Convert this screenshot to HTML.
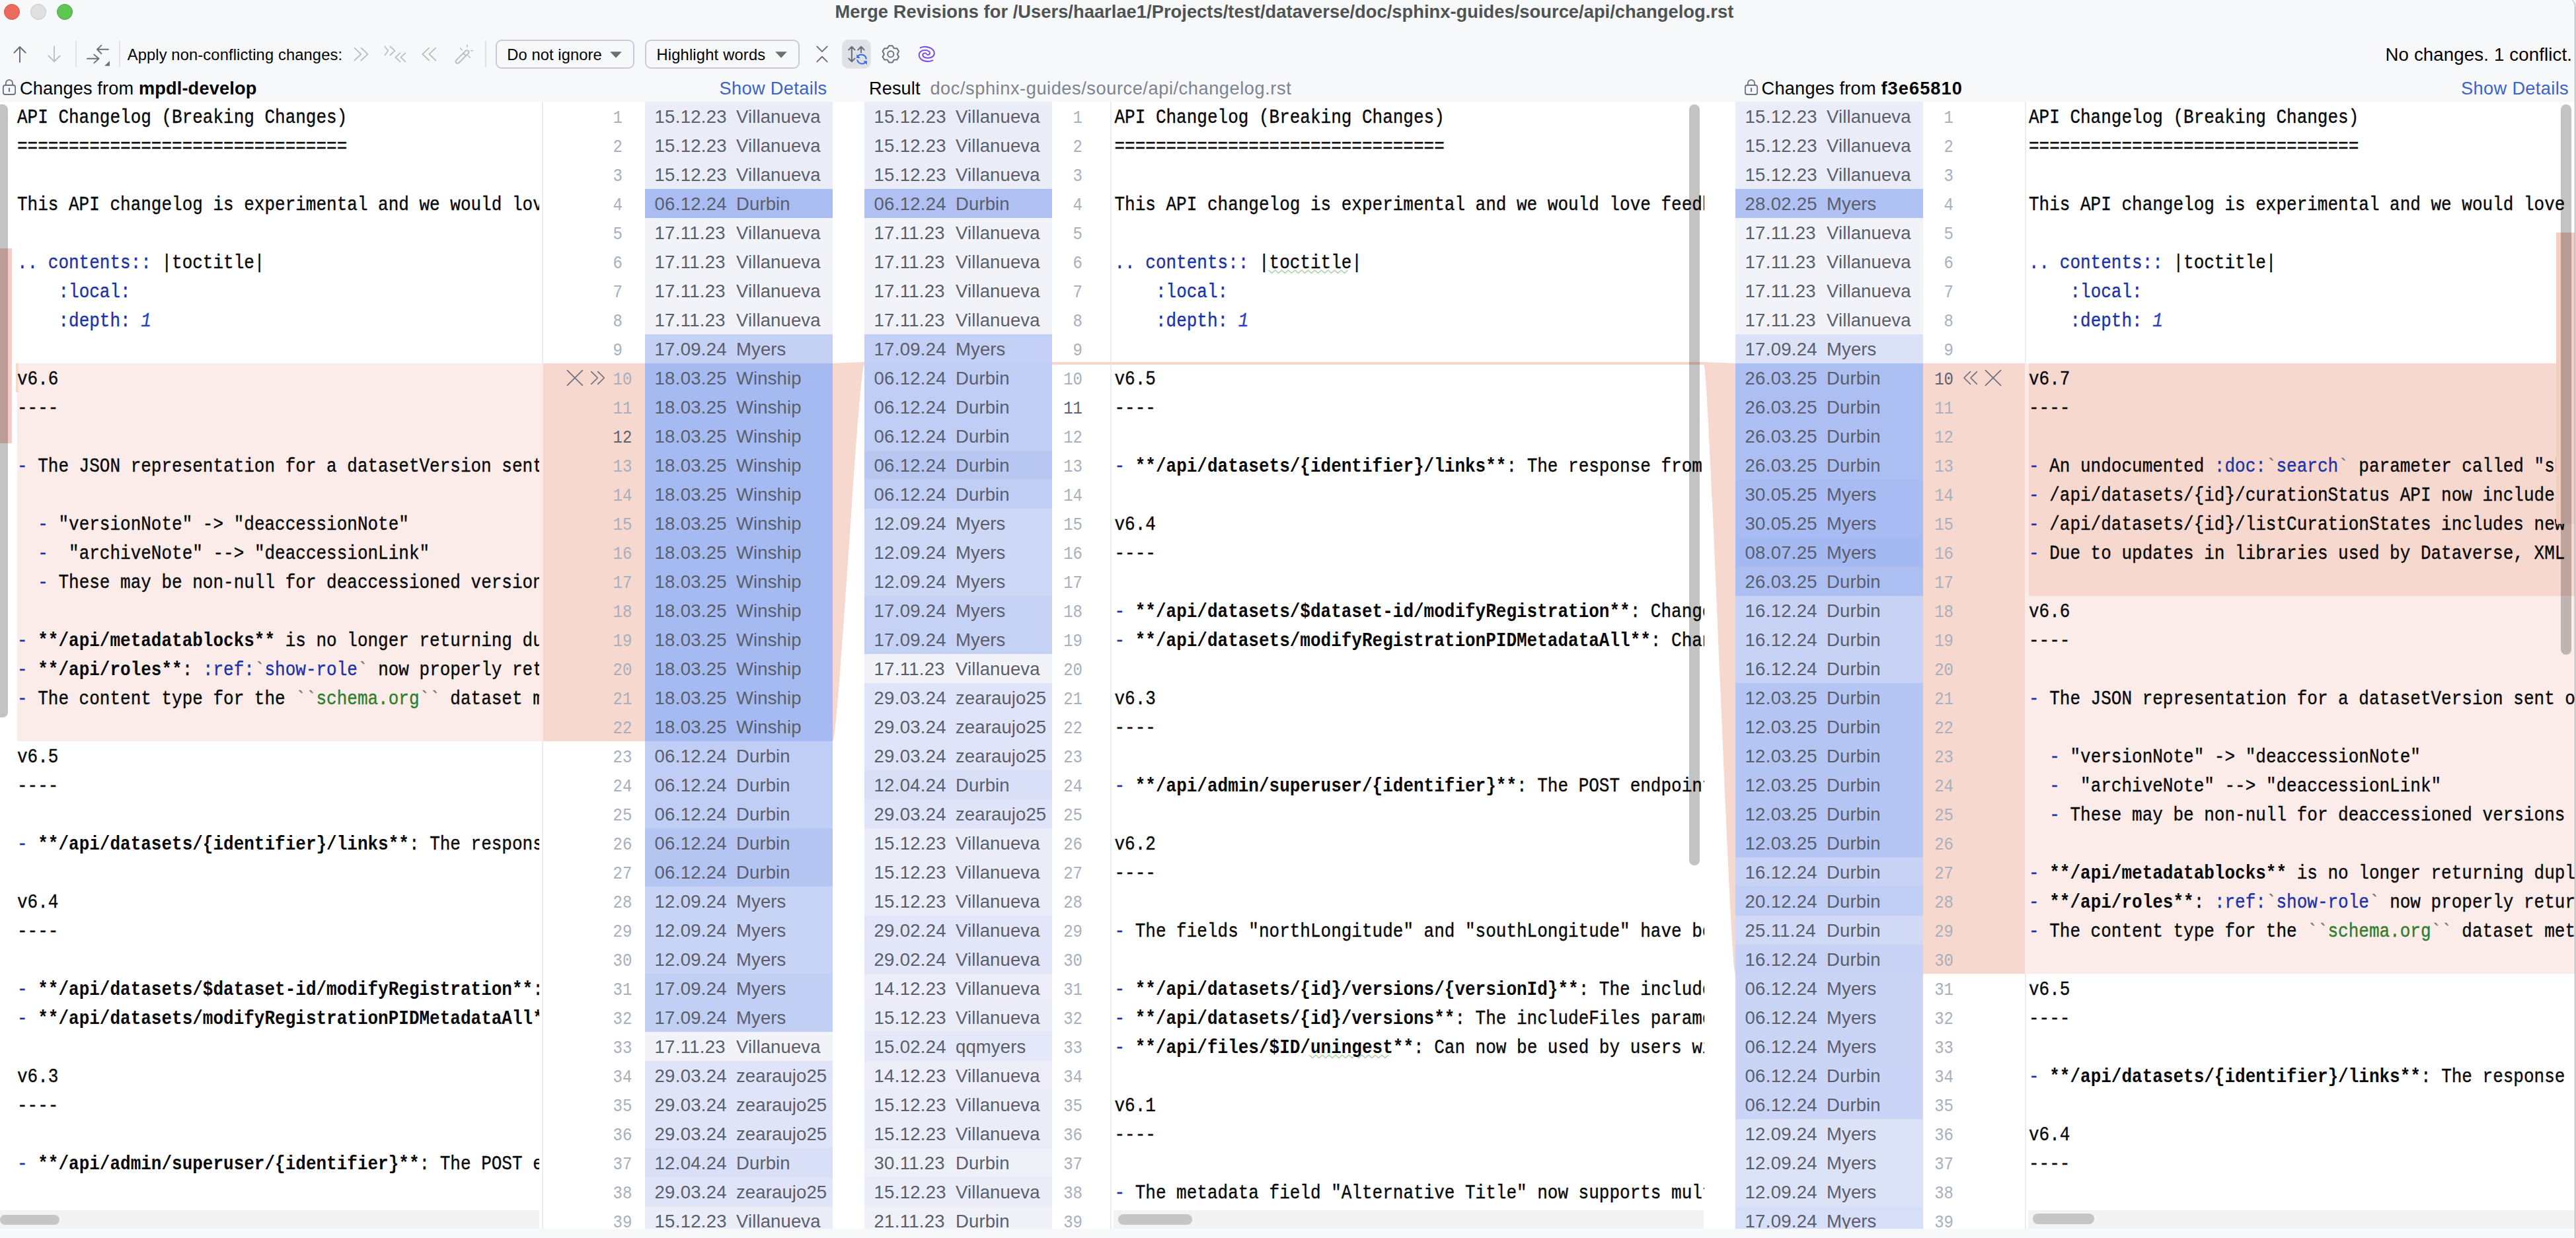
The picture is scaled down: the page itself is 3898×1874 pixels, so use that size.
<!DOCTYPE html><html><head><meta charset="utf-8"><style>
html,body{margin:0;padding:0;}
body{width:3898px;height:1874px;position:relative;overflow:hidden;background:#f7f8fa;font-family:"Liberation Sans",sans-serif;}
.tp{position:absolute;top:154px;height:1706px;overflow:hidden;}
.tl{position:absolute;height:44px;line-height:44px;padding-top:3px;box-sizing:border-box;white-space:pre;font-family:"Liberation Mono",monospace;font-size:26px;color:#080808;-webkit-text-stroke:0.35px currentColor;transform:scaleY(1.14);transform-origin:0 31.5px;}
.kb{color:#1c33a8;}
.kB{font-weight:bold;-webkit-text-stroke:0;}
.kg{color:#7a7a7a;}
.kG{color:#2f7d2f;}
.ki{color:#2a44c0;font-style:italic;}
.an{position:absolute;height:44px;line-height:44px;padding-top:1px;box-sizing:border-box;font-size:27.5px;letter-spacing:0.3px;color:#5a5e6a;white-space:pre;}
.ln{position:absolute;width:60px;text-align:right;height:44px;line-height:44px;padding-top:2px;box-sizing:border-box;font-family:"Liberation Mono",monospace;font-size:24px;color:#a8afbd;transform:scaleY(1.125);transform-origin:0 14.1px;}
.ln.cur{color:#5e626e;}
.ui{position:absolute;white-space:pre;}
</style></head><body>
<div style="position:absolute;left:6px;top:6px;width:24px;height:24px;box-sizing:border-box;border-radius:50%;background:#ec6a5e;border:1px solid #d8543f"></div>
<div style="position:absolute;left:46px;top:6px;width:24px;height:24px;box-sizing:border-box;border-radius:50%;background:#e0e0e0;border:1px solid #c6c6c6"></div>
<div style="position:absolute;left:86px;top:6px;width:24px;height:24px;box-sizing:border-box;border-radius:50%;background:#5fc653;border:1px solid #40a93a"></div>
<div class="ui" style="left:1263.5px;top:1px;height:36px;line-height:34px;font-size:27.3px;letter-spacing:0.035px;font-weight:bold;color:#505354">Merge Revisions for /Users/haarlae1/Projects/test/dataverse/doc/sphinx-guides/source/api/changelog.rst</div>
<svg style="position:absolute;left:0;top:55px" width="760" height="60" viewBox="0 55 760 60">
<g fill="none" stroke-linecap="round" stroke-linejoin="round">
<path d="M30 71 V94 M21.5 79.7 L30 71 L38.7 79.7" stroke="#6c707e" stroke-width="2"/>
<path d="M82 70 V93.5 M73.4 84.5 L82 93 L90.8 84.5" stroke="#bdbdbd" stroke-width="1.8"/>
<path d="M147 74.8 H164 M153.5 68.6 L147 74.8 L153.5 81.2" stroke="#6c707e" stroke-width="1.9"/>
<path d="M132 88.8 H149.6 M142.3 82.6 L149.6 88.8 L142.3 95.4" stroke="#6c707e" stroke-width="1.9"/>
<path d="M536.3 72.4 L546.4 82 L536.3 91.5 M546.4 72.4 L556.5 82 L546.4 91.5" stroke="#bdbdbd" stroke-width="1.8"/>
<path d="M582.3 70.3 L587.3 76.7 L582.3 83.5 M590.3 70.3 L597.4 76.7 L590.3 83.5" stroke="#bdbdbd" stroke-width="1.8"/>
<path d="M605.5 80.2 L598.4 86.8 L605.5 93.4 M613.5 80.2 L606.5 86.8 L613.5 93.4" stroke="#bdbdbd" stroke-width="1.8"/>
<path d="M649.4 72.4 L639.3 82 L649.4 91.5 M659.5 72.4 L649.4 82 L659.5 91.5" stroke="#bdbdbd" stroke-width="1.8"/>
<path d="M690.5 91 L704.5 77 a2.8 2.8 0 0 1 4 4 L694.5 95 a2.8 2.8 0 0 1 -4 -4 Z M701 80.5 L705 84.5" stroke="#bdbdbd" stroke-width="1.8"/>
<path d="M706.9 68 V71 M712.5 76.7 H715.5 M708.4 84.3 L711.5 87.3 M696.3 72.7 L699.3 75.7" stroke="#bdbdbd" stroke-width="1.6"/>
</g>
<path d="M166 92.3 V99.8 H158.1 Z" fill="#6c707e"/>
<rect x="114" y="62" width="2" height="39.6" fill="#dfe1e5"/>
<rect x="180" y="62" width="2" height="39.6" fill="#dfe1e5"/>
<rect x="734" y="62" width="2" height="39.6" fill="#dfe1e5"/>
</svg>
<div class="ui" style="left:192.7px;top:61px;height:44px;line-height:44px;font-size:23.7px;letter-spacing:0.14px;color:#000">Apply non-conflicting changes:</div>
<div style="position:absolute;left:750px;top:60px;width:210px;height:44px;box-sizing:border-box;border:2px solid #c9ccd6;border-radius:9px;"></div>
<div class="ui" style="left:767.3px;top:61px;height:44px;line-height:44px;font-size:23.7px;letter-spacing:0.1px;color:#000">Do not ignore</div>
<svg style="position:absolute;left:920px;top:75px" width="24" height="16"><path d="M3.2 3.3 H20.8 L12 12.8 Z" fill="#6e6e6e"/></svg>
<div style="position:absolute;left:976px;top:60px;width:234px;height:44px;box-sizing:border-box;border:2px solid #c9ccd6;border-radius:9px;"></div>
<div class="ui" style="left:993.4px;top:61px;height:44px;line-height:44px;font-size:23.7px;letter-spacing:0.2px;color:#000">Highlight words</div>
<svg style="position:absolute;left:1170px;top:75px" width="24" height="16"><path d="M3.2 3.3 H20.8 L12 12.8 Z" fill="#6e6e6e"/></svg>
<svg style="position:absolute;left:1220px;top:55px" width="220" height="60" viewBox="1220 55 220 60">
<path d="M1236.3 70.4 L1244 78.1 L1251.7 70.4 M1236.3 93.4 L1244 85.7 L1251.7 93.4" fill="none" stroke="#6c707e" stroke-width="2" stroke-linecap="round" stroke-linejoin="round"/>
<rect x="1274" y="60" width="43.7" height="43.7" rx="9.5" fill="#dfe1e5"/>
<path d="M1288.9 71 V92.8 M1284.2 75.4 L1288.9 70.7 L1293.5 75.4 M1284.2 88.5 L1288.9 93.2 L1293.5 88.5 M1303 71 V79.4 M1298.3 75.4 L1303 70.7 L1307.7 75.4" fill="none" stroke="#6c707e" stroke-width="2.1" stroke-linecap="round" stroke-linejoin="round"/>
<path d="M1297.6 85.6 A7.4 7.4 0 0 1 1310.8 89.6 M1310.6 93.2 A7.4 7.4 0 0 1 1297.2 90.4" fill="none" stroke="#3d6cf0" stroke-width="2.1"/>
<path d="M1296.2 82.2 V87.9 H1301.9 Z M1312 97.9 V92.2 H1306.3 Z" fill="#3d6cf0"/>
<g transform="translate(1347.8 81.9)">
<path d="M-2.60 -12.60 L2.60 -12.60 L4.95 -8.57 L9.61 -8.55 L12.21 -4.05 L9.90 0.00 L12.21 4.05 L9.61 8.55 L4.95 8.57 L2.60 12.60 L-2.60 12.60 L-4.95 8.57 L-9.61 8.55 L-12.21 4.05 L-9.90 0.00 L-12.21 -4.05 L-9.61 -8.55 L-4.95 -8.57 Z" fill="none" stroke="#6c707e" stroke-width="2" stroke-linejoin="round"/>
<circle cx="0" cy="0" r="4.6" fill="none" stroke="#6c707e" stroke-width="2"/>
</g>
<g transform="translate(1380 62)" fill="none" stroke="#7546e8" stroke-width="1.9" stroke-linecap="round">
<path d="M12.6 10.3 C15 9 17 8.7 19.4 8.7 C27 8.7 33.8 13 33.8 18.7 C33.8 23 29.5 25.8 24.5 25.8 C20 25.8 16.2 24 16.2 21.3 C16.2 19.5 18 18.4 20 18.4 C21 18.4 21.8 19 22 19.7"/>
<path d="M31.5 29.4 C29 30.5 26.5 31 23.6 31 C16 31 10.7 26.5 10.7 21 C10.7 17 14.5 13.9 19.4 13.9 C24 13.9 27.1 16 27.1 18.4 C27.1 20 25.5 21 23.3 21"/>
</g>
</svg>
<div class="ui" style="left:3609.5px;top:61px;height:44px;line-height:44px;font-size:27.6px;letter-spacing:0.15px;color:#000">No changes. 1 conflict.</div>
<svg style="position:absolute;left:0px;top:114px" width="30" height="34" viewBox="0 0 30 34"><path d="M8.9 15 V12 A5.1 5.1 0 0 1 19.1 12 V15" fill="none" stroke="#6c707e" stroke-width="1.8"/><rect x="4.9" y="15" width="18.2" height="14" rx="3" fill="none" stroke="#6c707e" stroke-width="1.8"/><path d="M14 19 V25" stroke="#6c707e" stroke-width="2"/></svg>
<div class="ui" style="left:30px;top:113.5px;height:40px;line-height:40px;font-size:27.2px;letter-spacing:0.12px;color:#000">Changes from <b style="letter-spacing:0.15px">mpdl-develop</b></div>
<div class="ui" style="left:1088.5px;top:113.5px;height:40px;line-height:40px;font-size:27.2px;letter-spacing:0.36px;color:#3d63c8">Show Details</div>
<div class="ui" style="left:1315px;top:113.5px;height:40px;line-height:40px;font-size:27.2px;letter-spacing:0.08px;color:#000">Result</div>
<div class="ui" style="left:1407.4px;top:113.5px;height:40px;line-height:40px;font-size:27.2px;letter-spacing:0.57px;color:#7f8390">doc/sphinx-guides/source/api/changelog.rst</div>
<svg style="position:absolute;left:2636.1px;top:114px" width="30" height="34" viewBox="0 0 30 34"><path d="M8.9 15 V12 A5.1 5.1 0 0 1 19.1 12 V15" fill="none" stroke="#6c707e" stroke-width="1.8"/><rect x="4.9" y="15" width="18.2" height="14" rx="3" fill="none" stroke="#6c707e" stroke-width="1.8"/><path d="M14 19 V25" stroke="#6c707e" stroke-width="2"/></svg>
<div class="ui" style="left:2665.6px;top:113.5px;height:40px;line-height:40px;font-size:27.2px;letter-spacing:0.2px;color:#000">Changes from <b style="letter-spacing:1.05px">f3e65810</b></div>
<div class="ui" style="right:11px;top:113.5px;height:40px;line-height:40px;font-size:27.2px;letter-spacing:0.36px;color:#3d63c8">Show Details</div>
<div style="position:absolute;left:0px;top:154px;width:3898px;height:1706px;background:#ffffff;"></div>
<div style="position:absolute;left:26px;top:550px;width:796px;height:572px;background:#fbece9;"></div>
<div style="position:absolute;left:24px;top:550px;width:4px;height:44px;background:#f7d8cf;"></div>
<div style="position:absolute;left:822px;top:550px;width:154px;height:572px;background:#f7d8ce;"></div>
<div style="position:absolute;left:2910px;top:550px;width:154px;height:924px;background:#f7d8ce;"></div>
<div style="position:absolute;left:3064px;top:550px;width:834px;height:924px;background:#fbece9;"></div>
<div style="position:absolute;left:3070px;top:550px;width:828px;height:352px;background:#f7d8ce;"></div>
<div style="position:absolute;left:820px;top:154px;width:2px;height:396px;background:#ebecf0;"></div>
<div style="position:absolute;left:820px;top:1122px;width:2px;height:738px;background:#ebecf0;"></div>
<div style="position:absolute;left:1680px;top:154px;width:2px;height:1706px;background:#ebecf0;"></div>
<div style="position:absolute;left:3064px;top:154px;width:2px;height:396px;background:#ebecf0;"></div>
<div style="position:absolute;left:3064px;top:1474px;width:2px;height:386px;background:#ebecf0;"></div>
<svg style="position:absolute;left:0;top:0" width="3898" height="1874"><polyline points="1919.5 409.0 1924.5 413.5 1929.5 409.0 1934.5 413.5 1939.5 409.0 1944.5 413.5 1949.5 409.0 1954.5 413.5 1959.5 409.0 1964.5 413.5 1969.5 409.0 1974.5 413.5 1979.5 409.0 1984.5 413.5 1989.5 409.0 1994.5 413.5 1999.5 409.0 2004.5 413.5 2009.5 409.0 2014.5 413.5 2019.5 409.0 2024.5 413.5 2029.5 409.0 2034.5 413.5 2039.5 409.0" fill="none" stroke="#a9d2a3" stroke-width="1.4"/><polyline points="1981.0 1597.0 1986.0 1601.5 1991.0 1597.0 1996.0 1601.5 2001.0 1597.0 2006.0 1601.5 2011.0 1597.0 2016.0 1601.5 2021.0 1597.0 2026.0 1601.5 2031.0 1597.0 2036.0 1601.5 2041.0 1597.0 2046.0 1601.5 2051.0 1597.0 2056.0 1601.5 2061.0 1597.0 2066.0 1601.5 2071.0 1597.0 2076.0 1601.5 2081.0 1597.0 2086.0 1601.5 2091.0 1597.0 2096.0 1601.5 2101.0 1597.0" fill="none" stroke="#a9d2a3" stroke-width="1.4"/></svg>
<div style="position:absolute;left:976px;top:154px;width:284px;height:44px;background:#eaedf8;"></div>
<div style="position:absolute;left:976px;top:198px;width:284px;height:44px;background:#eaedf8;"></div>
<div style="position:absolute;left:976px;top:242px;width:284px;height:44px;background:#eaedf8;"></div>
<div style="position:absolute;left:976px;top:286px;width:284px;height:44px;background:#aabdf3;"></div>
<div style="position:absolute;left:976px;top:330px;width:284px;height:44px;background:#f2f3f8;"></div>
<div style="position:absolute;left:976px;top:374px;width:284px;height:44px;background:#f2f3f8;"></div>
<div style="position:absolute;left:976px;top:418px;width:284px;height:44px;background:#f2f3f8;"></div>
<div style="position:absolute;left:976px;top:462px;width:284px;height:44px;background:#f2f3f8;"></div>
<div style="position:absolute;left:976px;top:506px;width:284px;height:44px;background:#c5d0f5;"></div>
<div style="position:absolute;left:976px;top:550px;width:284px;height:44px;background:#a6baf2;"></div>
<div style="position:absolute;left:976px;top:594px;width:284px;height:44px;background:#a6baf2;"></div>
<div style="position:absolute;left:976px;top:638px;width:284px;height:44px;background:#a6baf2;"></div>
<div style="position:absolute;left:976px;top:682px;width:284px;height:44px;background:#a6baf2;"></div>
<div style="position:absolute;left:976px;top:726px;width:284px;height:44px;background:#a6baf2;"></div>
<div style="position:absolute;left:976px;top:770px;width:284px;height:44px;background:#a6baf2;"></div>
<div style="position:absolute;left:976px;top:814px;width:284px;height:44px;background:#a6baf2;"></div>
<div style="position:absolute;left:976px;top:858px;width:284px;height:44px;background:#a6baf2;"></div>
<div style="position:absolute;left:976px;top:902px;width:284px;height:44px;background:#a6baf2;"></div>
<div style="position:absolute;left:976px;top:946px;width:284px;height:44px;background:#a6baf2;"></div>
<div style="position:absolute;left:976px;top:990px;width:284px;height:44px;background:#a6baf2;"></div>
<div style="position:absolute;left:976px;top:1034px;width:284px;height:44px;background:#a6baf2;"></div>
<div style="position:absolute;left:976px;top:1078px;width:284px;height:44px;background:#a6baf2;"></div>
<div style="position:absolute;left:976px;top:1122px;width:284px;height:44px;background:#c0cdf4;"></div>
<div style="position:absolute;left:976px;top:1166px;width:284px;height:44px;background:#c0cdf4;"></div>
<div style="position:absolute;left:976px;top:1210px;width:284px;height:44px;background:#c0cdf4;"></div>
<div style="position:absolute;left:976px;top:1254px;width:284px;height:44px;background:#b5c5f2;"></div>
<div style="position:absolute;left:976px;top:1298px;width:284px;height:44px;background:#b5c5f2;"></div>
<div style="position:absolute;left:976px;top:1342px;width:284px;height:44px;background:#c8d4f5;"></div>
<div style="position:absolute;left:976px;top:1386px;width:284px;height:44px;background:#c8d4f5;"></div>
<div style="position:absolute;left:976px;top:1430px;width:284px;height:44px;background:#c8d4f5;"></div>
<div style="position:absolute;left:976px;top:1474px;width:284px;height:44px;background:#c2cff4;"></div>
<div style="position:absolute;left:976px;top:1518px;width:284px;height:44px;background:#c2cff4;"></div>
<div style="position:absolute;left:976px;top:1562px;width:284px;height:44px;background:#f2f3f8;"></div>
<div style="position:absolute;left:976px;top:1606px;width:284px;height:44px;background:#e0e4f8;"></div>
<div style="position:absolute;left:976px;top:1650px;width:284px;height:44px;background:#e0e4f8;"></div>
<div style="position:absolute;left:976px;top:1694px;width:284px;height:44px;background:#e0e4f8;"></div>
<div style="position:absolute;left:976px;top:1738px;width:284px;height:44px;background:#d8dff7;"></div>
<div style="position:absolute;left:976px;top:1782px;width:284px;height:44px;background:#e0e4f8;"></div>
<div style="position:absolute;left:976px;top:1826px;width:284px;height:34px;background:#eaedf8;"></div>
<div class="an" style="left:990.5px;top:154px">15.12.23</div>
<div class="an" style="left:1114px;top:154px;letter-spacing:0.12px">Villanueva</div>
<div class="an" style="left:990.5px;top:198px">15.12.23</div>
<div class="an" style="left:1114px;top:198px;letter-spacing:0.12px">Villanueva</div>
<div class="an" style="left:990.5px;top:242px">15.12.23</div>
<div class="an" style="left:1114px;top:242px;letter-spacing:0.12px">Villanueva</div>
<div class="an" style="left:990.5px;top:286px">06.12.24</div>
<div class="an" style="left:1114px;top:286px;letter-spacing:0.12px">Durbin</div>
<div class="an" style="left:990.5px;top:330px">17.11.23</div>
<div class="an" style="left:1114px;top:330px;letter-spacing:0.12px">Villanueva</div>
<div class="an" style="left:990.5px;top:374px">17.11.23</div>
<div class="an" style="left:1114px;top:374px;letter-spacing:0.12px">Villanueva</div>
<div class="an" style="left:990.5px;top:418px">17.11.23</div>
<div class="an" style="left:1114px;top:418px;letter-spacing:0.12px">Villanueva</div>
<div class="an" style="left:990.5px;top:462px">17.11.23</div>
<div class="an" style="left:1114px;top:462px;letter-spacing:0.12px">Villanueva</div>
<div class="an" style="left:990.5px;top:506px">17.09.24</div>
<div class="an" style="left:1114px;top:506px;letter-spacing:0.12px">Myers</div>
<div class="an" style="left:990.5px;top:550px">18.03.25</div>
<div class="an" style="left:1114px;top:550px;letter-spacing:0.12px">Winship</div>
<div class="an" style="left:990.5px;top:594px">18.03.25</div>
<div class="an" style="left:1114px;top:594px;letter-spacing:0.12px">Winship</div>
<div class="an" style="left:990.5px;top:638px">18.03.25</div>
<div class="an" style="left:1114px;top:638px;letter-spacing:0.12px">Winship</div>
<div class="an" style="left:990.5px;top:682px">18.03.25</div>
<div class="an" style="left:1114px;top:682px;letter-spacing:0.12px">Winship</div>
<div class="an" style="left:990.5px;top:726px">18.03.25</div>
<div class="an" style="left:1114px;top:726px;letter-spacing:0.12px">Winship</div>
<div class="an" style="left:990.5px;top:770px">18.03.25</div>
<div class="an" style="left:1114px;top:770px;letter-spacing:0.12px">Winship</div>
<div class="an" style="left:990.5px;top:814px">18.03.25</div>
<div class="an" style="left:1114px;top:814px;letter-spacing:0.12px">Winship</div>
<div class="an" style="left:990.5px;top:858px">18.03.25</div>
<div class="an" style="left:1114px;top:858px;letter-spacing:0.12px">Winship</div>
<div class="an" style="left:990.5px;top:902px">18.03.25</div>
<div class="an" style="left:1114px;top:902px;letter-spacing:0.12px">Winship</div>
<div class="an" style="left:990.5px;top:946px">18.03.25</div>
<div class="an" style="left:1114px;top:946px;letter-spacing:0.12px">Winship</div>
<div class="an" style="left:990.5px;top:990px">18.03.25</div>
<div class="an" style="left:1114px;top:990px;letter-spacing:0.12px">Winship</div>
<div class="an" style="left:990.5px;top:1034px">18.03.25</div>
<div class="an" style="left:1114px;top:1034px;letter-spacing:0.12px">Winship</div>
<div class="an" style="left:990.5px;top:1078px">18.03.25</div>
<div class="an" style="left:1114px;top:1078px;letter-spacing:0.12px">Winship</div>
<div class="an" style="left:990.5px;top:1122px">06.12.24</div>
<div class="an" style="left:1114px;top:1122px;letter-spacing:0.12px">Durbin</div>
<div class="an" style="left:990.5px;top:1166px">06.12.24</div>
<div class="an" style="left:1114px;top:1166px;letter-spacing:0.12px">Durbin</div>
<div class="an" style="left:990.5px;top:1210px">06.12.24</div>
<div class="an" style="left:1114px;top:1210px;letter-spacing:0.12px">Durbin</div>
<div class="an" style="left:990.5px;top:1254px">06.12.24</div>
<div class="an" style="left:1114px;top:1254px;letter-spacing:0.12px">Durbin</div>
<div class="an" style="left:990.5px;top:1298px">06.12.24</div>
<div class="an" style="left:1114px;top:1298px;letter-spacing:0.12px">Durbin</div>
<div class="an" style="left:990.5px;top:1342px">12.09.24</div>
<div class="an" style="left:1114px;top:1342px;letter-spacing:0.12px">Myers</div>
<div class="an" style="left:990.5px;top:1386px">12.09.24</div>
<div class="an" style="left:1114px;top:1386px;letter-spacing:0.12px">Myers</div>
<div class="an" style="left:990.5px;top:1430px">12.09.24</div>
<div class="an" style="left:1114px;top:1430px;letter-spacing:0.12px">Myers</div>
<div class="an" style="left:990.5px;top:1474px">17.09.24</div>
<div class="an" style="left:1114px;top:1474px;letter-spacing:0.12px">Myers</div>
<div class="an" style="left:990.5px;top:1518px">17.09.24</div>
<div class="an" style="left:1114px;top:1518px;letter-spacing:0.12px">Myers</div>
<div class="an" style="left:990.5px;top:1562px">17.11.23</div>
<div class="an" style="left:1114px;top:1562px;letter-spacing:0.12px">Villanueva</div>
<div class="an" style="left:990.5px;top:1606px">29.03.24</div>
<div class="an" style="left:1114px;top:1606px;letter-spacing:0.12px">zearaujo25</div>
<div class="an" style="left:990.5px;top:1650px">29.03.24</div>
<div class="an" style="left:1114px;top:1650px;letter-spacing:0.12px">zearaujo25</div>
<div class="an" style="left:990.5px;top:1694px">29.03.24</div>
<div class="an" style="left:1114px;top:1694px;letter-spacing:0.12px">zearaujo25</div>
<div class="an" style="left:990.5px;top:1738px">12.04.24</div>
<div class="an" style="left:1114px;top:1738px;letter-spacing:0.12px">Durbin</div>
<div class="an" style="left:990.5px;top:1782px">29.03.24</div>
<div class="an" style="left:1114px;top:1782px;letter-spacing:0.12px">zearaujo25</div>
<div class="an" style="left:990.5px;top:1826px">15.12.23</div>
<div class="an" style="left:1114px;top:1826px;letter-spacing:0.12px">Villanueva</div>
<div style="position:absolute;left:1308px;top:154px;width:284px;height:44px;background:#eaedf8;"></div>
<div style="position:absolute;left:1308px;top:198px;width:284px;height:44px;background:#eaedf8;"></div>
<div style="position:absolute;left:1308px;top:242px;width:284px;height:44px;background:#eaedf8;"></div>
<div style="position:absolute;left:1308px;top:286px;width:284px;height:44px;background:#b0c0f2;"></div>
<div style="position:absolute;left:1308px;top:330px;width:284px;height:44px;background:#f2f3f8;"></div>
<div style="position:absolute;left:1308px;top:374px;width:284px;height:44px;background:#f2f3f8;"></div>
<div style="position:absolute;left:1308px;top:418px;width:284px;height:44px;background:#f2f3f8;"></div>
<div style="position:absolute;left:1308px;top:462px;width:284px;height:44px;background:#f2f3f8;"></div>
<div style="position:absolute;left:1308px;top:506px;width:284px;height:44px;background:#c3cff4;"></div>
<div style="position:absolute;left:1308px;top:550px;width:284px;height:44px;background:#c0cdf4;"></div>
<div style="position:absolute;left:1308px;top:594px;width:284px;height:44px;background:#c0cdf4;"></div>
<div style="position:absolute;left:1308px;top:638px;width:284px;height:44px;background:#c0cdf4;"></div>
<div style="position:absolute;left:1308px;top:682px;width:284px;height:44px;background:#b8c7f2;"></div>
<div style="position:absolute;left:1308px;top:726px;width:284px;height:44px;background:#c0cdf4;"></div>
<div style="position:absolute;left:1308px;top:770px;width:284px;height:44px;background:#cdd8f7;"></div>
<div style="position:absolute;left:1308px;top:814px;width:284px;height:44px;background:#cdd8f7;"></div>
<div style="position:absolute;left:1308px;top:858px;width:284px;height:44px;background:#cdd8f7;"></div>
<div style="position:absolute;left:1308px;top:902px;width:284px;height:44px;background:#c5d1f5;"></div>
<div style="position:absolute;left:1308px;top:946px;width:284px;height:44px;background:#c5d1f5;"></div>
<div style="position:absolute;left:1308px;top:990px;width:284px;height:44px;background:#f2f3f8;"></div>
<div style="position:absolute;left:1308px;top:1034px;width:284px;height:44px;background:#e0e4f8;"></div>
<div style="position:absolute;left:1308px;top:1078px;width:284px;height:44px;background:#e0e4f8;"></div>
<div style="position:absolute;left:1308px;top:1122px;width:284px;height:44px;background:#e0e4f8;"></div>
<div style="position:absolute;left:1308px;top:1166px;width:284px;height:44px;background:#d8dff7;"></div>
<div style="position:absolute;left:1308px;top:1210px;width:284px;height:44px;background:#e0e4f8;"></div>
<div style="position:absolute;left:1308px;top:1254px;width:284px;height:44px;background:#eaedf8;"></div>
<div style="position:absolute;left:1308px;top:1298px;width:284px;height:44px;background:#eaedf8;"></div>
<div style="position:absolute;left:1308px;top:1342px;width:284px;height:44px;background:#eaedf8;"></div>
<div style="position:absolute;left:1308px;top:1386px;width:284px;height:44px;background:#e2e6f8;"></div>
<div style="position:absolute;left:1308px;top:1430px;width:284px;height:44px;background:#e2e6f8;"></div>
<div style="position:absolute;left:1308px;top:1474px;width:284px;height:44px;background:#ecedf8;"></div>
<div style="position:absolute;left:1308px;top:1518px;width:284px;height:44px;background:#eaedf8;"></div>
<div style="position:absolute;left:1308px;top:1562px;width:284px;height:44px;background:#e4e8f8;"></div>
<div style="position:absolute;left:1308px;top:1606px;width:284px;height:44px;background:#ecedf8;"></div>
<div style="position:absolute;left:1308px;top:1650px;width:284px;height:44px;background:#eaedf8;"></div>
<div style="position:absolute;left:1308px;top:1694px;width:284px;height:44px;background:#eaedf8;"></div>
<div style="position:absolute;left:1308px;top:1738px;width:284px;height:44px;background:#eef0f8;"></div>
<div style="position:absolute;left:1308px;top:1782px;width:284px;height:44px;background:#eaedf8;"></div>
<div style="position:absolute;left:1308px;top:1826px;width:284px;height:34px;background:#f0f1f8;"></div>
<div class="an" style="left:1322.5px;top:154px">15.12.23</div>
<div class="an" style="left:1446px;top:154px;letter-spacing:0.12px">Villanueva</div>
<div class="an" style="left:1322.5px;top:198px">15.12.23</div>
<div class="an" style="left:1446px;top:198px;letter-spacing:0.12px">Villanueva</div>
<div class="an" style="left:1322.5px;top:242px">15.12.23</div>
<div class="an" style="left:1446px;top:242px;letter-spacing:0.12px">Villanueva</div>
<div class="an" style="left:1322.5px;top:286px">06.12.24</div>
<div class="an" style="left:1446px;top:286px;letter-spacing:0.12px">Durbin</div>
<div class="an" style="left:1322.5px;top:330px">17.11.23</div>
<div class="an" style="left:1446px;top:330px;letter-spacing:0.12px">Villanueva</div>
<div class="an" style="left:1322.5px;top:374px">17.11.23</div>
<div class="an" style="left:1446px;top:374px;letter-spacing:0.12px">Villanueva</div>
<div class="an" style="left:1322.5px;top:418px">17.11.23</div>
<div class="an" style="left:1446px;top:418px;letter-spacing:0.12px">Villanueva</div>
<div class="an" style="left:1322.5px;top:462px">17.11.23</div>
<div class="an" style="left:1446px;top:462px;letter-spacing:0.12px">Villanueva</div>
<div class="an" style="left:1322.5px;top:506px">17.09.24</div>
<div class="an" style="left:1446px;top:506px;letter-spacing:0.12px">Myers</div>
<div class="an" style="left:1322.5px;top:550px">06.12.24</div>
<div class="an" style="left:1446px;top:550px;letter-spacing:0.12px">Durbin</div>
<div class="an" style="left:1322.5px;top:594px">06.12.24</div>
<div class="an" style="left:1446px;top:594px;letter-spacing:0.12px">Durbin</div>
<div class="an" style="left:1322.5px;top:638px">06.12.24</div>
<div class="an" style="left:1446px;top:638px;letter-spacing:0.12px">Durbin</div>
<div class="an" style="left:1322.5px;top:682px">06.12.24</div>
<div class="an" style="left:1446px;top:682px;letter-spacing:0.12px">Durbin</div>
<div class="an" style="left:1322.5px;top:726px">06.12.24</div>
<div class="an" style="left:1446px;top:726px;letter-spacing:0.12px">Durbin</div>
<div class="an" style="left:1322.5px;top:770px">12.09.24</div>
<div class="an" style="left:1446px;top:770px;letter-spacing:0.12px">Myers</div>
<div class="an" style="left:1322.5px;top:814px">12.09.24</div>
<div class="an" style="left:1446px;top:814px;letter-spacing:0.12px">Myers</div>
<div class="an" style="left:1322.5px;top:858px">12.09.24</div>
<div class="an" style="left:1446px;top:858px;letter-spacing:0.12px">Myers</div>
<div class="an" style="left:1322.5px;top:902px">17.09.24</div>
<div class="an" style="left:1446px;top:902px;letter-spacing:0.12px">Myers</div>
<div class="an" style="left:1322.5px;top:946px">17.09.24</div>
<div class="an" style="left:1446px;top:946px;letter-spacing:0.12px">Myers</div>
<div class="an" style="left:1322.5px;top:990px">17.11.23</div>
<div class="an" style="left:1446px;top:990px;letter-spacing:0.12px">Villanueva</div>
<div class="an" style="left:1322.5px;top:1034px">29.03.24</div>
<div class="an" style="left:1446px;top:1034px;letter-spacing:0.12px">zearaujo25</div>
<div class="an" style="left:1322.5px;top:1078px">29.03.24</div>
<div class="an" style="left:1446px;top:1078px;letter-spacing:0.12px">zearaujo25</div>
<div class="an" style="left:1322.5px;top:1122px">29.03.24</div>
<div class="an" style="left:1446px;top:1122px;letter-spacing:0.12px">zearaujo25</div>
<div class="an" style="left:1322.5px;top:1166px">12.04.24</div>
<div class="an" style="left:1446px;top:1166px;letter-spacing:0.12px">Durbin</div>
<div class="an" style="left:1322.5px;top:1210px">29.03.24</div>
<div class="an" style="left:1446px;top:1210px;letter-spacing:0.12px">zearaujo25</div>
<div class="an" style="left:1322.5px;top:1254px">15.12.23</div>
<div class="an" style="left:1446px;top:1254px;letter-spacing:0.12px">Villanueva</div>
<div class="an" style="left:1322.5px;top:1298px">15.12.23</div>
<div class="an" style="left:1446px;top:1298px;letter-spacing:0.12px">Villanueva</div>
<div class="an" style="left:1322.5px;top:1342px">15.12.23</div>
<div class="an" style="left:1446px;top:1342px;letter-spacing:0.12px">Villanueva</div>
<div class="an" style="left:1322.5px;top:1386px">29.02.24</div>
<div class="an" style="left:1446px;top:1386px;letter-spacing:0.12px">Villanueva</div>
<div class="an" style="left:1322.5px;top:1430px">29.02.24</div>
<div class="an" style="left:1446px;top:1430px;letter-spacing:0.12px">Villanueva</div>
<div class="an" style="left:1322.5px;top:1474px">14.12.23</div>
<div class="an" style="left:1446px;top:1474px;letter-spacing:0.12px">Villanueva</div>
<div class="an" style="left:1322.5px;top:1518px">15.12.23</div>
<div class="an" style="left:1446px;top:1518px;letter-spacing:0.12px">Villanueva</div>
<div class="an" style="left:1322.5px;top:1562px">15.02.24</div>
<div class="an" style="left:1446px;top:1562px;letter-spacing:0.12px">qqmyers</div>
<div class="an" style="left:1322.5px;top:1606px">14.12.23</div>
<div class="an" style="left:1446px;top:1606px;letter-spacing:0.12px">Villanueva</div>
<div class="an" style="left:1322.5px;top:1650px">15.12.23</div>
<div class="an" style="left:1446px;top:1650px;letter-spacing:0.12px">Villanueva</div>
<div class="an" style="left:1322.5px;top:1694px">15.12.23</div>
<div class="an" style="left:1446px;top:1694px;letter-spacing:0.12px">Villanueva</div>
<div class="an" style="left:1322.5px;top:1738px">30.11.23</div>
<div class="an" style="left:1446px;top:1738px;letter-spacing:0.12px">Durbin</div>
<div class="an" style="left:1322.5px;top:1782px">15.12.23</div>
<div class="an" style="left:1446px;top:1782px;letter-spacing:0.12px">Villanueva</div>
<div class="an" style="left:1322.5px;top:1826px">21.11.23</div>
<div class="an" style="left:1446px;top:1826px;letter-spacing:0.12px">Durbin</div>
<div style="position:absolute;left:2626px;top:154px;width:284px;height:44px;background:#eaedf8;"></div>
<div style="position:absolute;left:2626px;top:198px;width:284px;height:44px;background:#eaedf8;"></div>
<div style="position:absolute;left:2626px;top:242px;width:284px;height:44px;background:#eaedf8;"></div>
<div style="position:absolute;left:2626px;top:286px;width:284px;height:44px;background:#b0c1f3;"></div>
<div style="position:absolute;left:2626px;top:330px;width:284px;height:44px;background:#f2f3f8;"></div>
<div style="position:absolute;left:2626px;top:374px;width:284px;height:44px;background:#f2f3f8;"></div>
<div style="position:absolute;left:2626px;top:418px;width:284px;height:44px;background:#f2f3f8;"></div>
<div style="position:absolute;left:2626px;top:462px;width:284px;height:44px;background:#f2f3f8;"></div>
<div style="position:absolute;left:2626px;top:506px;width:284px;height:44px;background:#dbe2f7;"></div>
<div style="position:absolute;left:2626px;top:550px;width:284px;height:44px;background:#adbff2;"></div>
<div style="position:absolute;left:2626px;top:594px;width:284px;height:44px;background:#adbff2;"></div>
<div style="position:absolute;left:2626px;top:638px;width:284px;height:44px;background:#adbff2;"></div>
<div style="position:absolute;left:2626px;top:682px;width:284px;height:44px;background:#adbff2;"></div>
<div style="position:absolute;left:2626px;top:726px;width:284px;height:44px;background:#a8bbf2;"></div>
<div style="position:absolute;left:2626px;top:770px;width:284px;height:44px;background:#a8bbf2;"></div>
<div style="position:absolute;left:2626px;top:814px;width:284px;height:44px;background:#a4b8f1;"></div>
<div style="position:absolute;left:2626px;top:858px;width:284px;height:44px;background:#adbff2;"></div>
<div style="position:absolute;left:2626px;top:902px;width:284px;height:44px;background:#c7d2f5;"></div>
<div style="position:absolute;left:2626px;top:946px;width:284px;height:44px;background:#c7d2f5;"></div>
<div style="position:absolute;left:2626px;top:990px;width:284px;height:44px;background:#c7d2f5;"></div>
<div style="position:absolute;left:2626px;top:1034px;width:284px;height:44px;background:#b4c5f3;"></div>
<div style="position:absolute;left:2626px;top:1078px;width:284px;height:44px;background:#b4c5f3;"></div>
<div style="position:absolute;left:2626px;top:1122px;width:284px;height:44px;background:#b4c5f3;"></div>
<div style="position:absolute;left:2626px;top:1166px;width:284px;height:44px;background:#b4c5f3;"></div>
<div style="position:absolute;left:2626px;top:1210px;width:284px;height:44px;background:#b4c5f3;"></div>
<div style="position:absolute;left:2626px;top:1254px;width:284px;height:44px;background:#b4c5f3;"></div>
<div style="position:absolute;left:2626px;top:1298px;width:284px;height:44px;background:#c7d2f5;"></div>
<div style="position:absolute;left:2626px;top:1342px;width:284px;height:44px;background:#c0cdf4;"></div>
<div style="position:absolute;left:2626px;top:1386px;width:284px;height:44px;background:#d0d9f6;"></div>
<div style="position:absolute;left:2626px;top:1430px;width:284px;height:44px;background:#c7d2f5;"></div>
<div style="position:absolute;left:2626px;top:1474px;width:284px;height:44px;background:#cad5f5;"></div>
<div style="position:absolute;left:2626px;top:1518px;width:284px;height:44px;background:#cad5f5;"></div>
<div style="position:absolute;left:2626px;top:1562px;width:284px;height:44px;background:#cad5f5;"></div>
<div style="position:absolute;left:2626px;top:1606px;width:284px;height:44px;background:#c9d4f6;"></div>
<div style="position:absolute;left:2626px;top:1650px;width:284px;height:44px;background:#c9d4f6;"></div>
<div style="position:absolute;left:2626px;top:1694px;width:284px;height:44px;background:#dde3f7;"></div>
<div style="position:absolute;left:2626px;top:1738px;width:284px;height:44px;background:#dde3f7;"></div>
<div style="position:absolute;left:2626px;top:1782px;width:284px;height:44px;background:#dde3f7;"></div>
<div style="position:absolute;left:2626px;top:1826px;width:284px;height:34px;background:#d7def7;"></div>
<div class="an" style="left:2640.5px;top:154px">15.12.23</div>
<div class="an" style="left:2764px;top:154px;letter-spacing:0.12px">Villanueva</div>
<div class="an" style="left:2640.5px;top:198px">15.12.23</div>
<div class="an" style="left:2764px;top:198px;letter-spacing:0.12px">Villanueva</div>
<div class="an" style="left:2640.5px;top:242px">15.12.23</div>
<div class="an" style="left:2764px;top:242px;letter-spacing:0.12px">Villanueva</div>
<div class="an" style="left:2640.5px;top:286px">28.02.25</div>
<div class="an" style="left:2764px;top:286px;letter-spacing:0.12px">Myers</div>
<div class="an" style="left:2640.5px;top:330px">17.11.23</div>
<div class="an" style="left:2764px;top:330px;letter-spacing:0.12px">Villanueva</div>
<div class="an" style="left:2640.5px;top:374px">17.11.23</div>
<div class="an" style="left:2764px;top:374px;letter-spacing:0.12px">Villanueva</div>
<div class="an" style="left:2640.5px;top:418px">17.11.23</div>
<div class="an" style="left:2764px;top:418px;letter-spacing:0.12px">Villanueva</div>
<div class="an" style="left:2640.5px;top:462px">17.11.23</div>
<div class="an" style="left:2764px;top:462px;letter-spacing:0.12px">Villanueva</div>
<div class="an" style="left:2640.5px;top:506px">17.09.24</div>
<div class="an" style="left:2764px;top:506px;letter-spacing:0.12px">Myers</div>
<div class="an" style="left:2640.5px;top:550px">26.03.25</div>
<div class="an" style="left:2764px;top:550px;letter-spacing:0.12px">Durbin</div>
<div class="an" style="left:2640.5px;top:594px">26.03.25</div>
<div class="an" style="left:2764px;top:594px;letter-spacing:0.12px">Durbin</div>
<div class="an" style="left:2640.5px;top:638px">26.03.25</div>
<div class="an" style="left:2764px;top:638px;letter-spacing:0.12px">Durbin</div>
<div class="an" style="left:2640.5px;top:682px">26.03.25</div>
<div class="an" style="left:2764px;top:682px;letter-spacing:0.12px">Durbin</div>
<div class="an" style="left:2640.5px;top:726px">30.05.25</div>
<div class="an" style="left:2764px;top:726px;letter-spacing:0.12px">Myers</div>
<div class="an" style="left:2640.5px;top:770px">30.05.25</div>
<div class="an" style="left:2764px;top:770px;letter-spacing:0.12px">Myers</div>
<div class="an" style="left:2640.5px;top:814px">08.07.25</div>
<div class="an" style="left:2764px;top:814px;letter-spacing:0.12px">Myers</div>
<div class="an" style="left:2640.5px;top:858px">26.03.25</div>
<div class="an" style="left:2764px;top:858px;letter-spacing:0.12px">Durbin</div>
<div class="an" style="left:2640.5px;top:902px">16.12.24</div>
<div class="an" style="left:2764px;top:902px;letter-spacing:0.12px">Durbin</div>
<div class="an" style="left:2640.5px;top:946px">16.12.24</div>
<div class="an" style="left:2764px;top:946px;letter-spacing:0.12px">Durbin</div>
<div class="an" style="left:2640.5px;top:990px">16.12.24</div>
<div class="an" style="left:2764px;top:990px;letter-spacing:0.12px">Durbin</div>
<div class="an" style="left:2640.5px;top:1034px">12.03.25</div>
<div class="an" style="left:2764px;top:1034px;letter-spacing:0.12px">Durbin</div>
<div class="an" style="left:2640.5px;top:1078px">12.03.25</div>
<div class="an" style="left:2764px;top:1078px;letter-spacing:0.12px">Durbin</div>
<div class="an" style="left:2640.5px;top:1122px">12.03.25</div>
<div class="an" style="left:2764px;top:1122px;letter-spacing:0.12px">Durbin</div>
<div class="an" style="left:2640.5px;top:1166px">12.03.25</div>
<div class="an" style="left:2764px;top:1166px;letter-spacing:0.12px">Durbin</div>
<div class="an" style="left:2640.5px;top:1210px">12.03.25</div>
<div class="an" style="left:2764px;top:1210px;letter-spacing:0.12px">Durbin</div>
<div class="an" style="left:2640.5px;top:1254px">12.03.25</div>
<div class="an" style="left:2764px;top:1254px;letter-spacing:0.12px">Durbin</div>
<div class="an" style="left:2640.5px;top:1298px">16.12.24</div>
<div class="an" style="left:2764px;top:1298px;letter-spacing:0.12px">Durbin</div>
<div class="an" style="left:2640.5px;top:1342px">20.12.24</div>
<div class="an" style="left:2764px;top:1342px;letter-spacing:0.12px">Durbin</div>
<div class="an" style="left:2640.5px;top:1386px">25.11.24</div>
<div class="an" style="left:2764px;top:1386px;letter-spacing:0.12px">Durbin</div>
<div class="an" style="left:2640.5px;top:1430px">16.12.24</div>
<div class="an" style="left:2764px;top:1430px;letter-spacing:0.12px">Durbin</div>
<div class="an" style="left:2640.5px;top:1474px">06.12.24</div>
<div class="an" style="left:2764px;top:1474px;letter-spacing:0.12px">Myers</div>
<div class="an" style="left:2640.5px;top:1518px">06.12.24</div>
<div class="an" style="left:2764px;top:1518px;letter-spacing:0.12px">Myers</div>
<div class="an" style="left:2640.5px;top:1562px">06.12.24</div>
<div class="an" style="left:2764px;top:1562px;letter-spacing:0.12px">Myers</div>
<div class="an" style="left:2640.5px;top:1606px">06.12.24</div>
<div class="an" style="left:2764px;top:1606px;letter-spacing:0.12px">Durbin</div>
<div class="an" style="left:2640.5px;top:1650px">06.12.24</div>
<div class="an" style="left:2764px;top:1650px;letter-spacing:0.12px">Durbin</div>
<div class="an" style="left:2640.5px;top:1694px">12.09.24</div>
<div class="an" style="left:2764px;top:1694px;letter-spacing:0.12px">Myers</div>
<div class="an" style="left:2640.5px;top:1738px">12.09.24</div>
<div class="an" style="left:2764px;top:1738px;letter-spacing:0.12px">Myers</div>
<div class="an" style="left:2640.5px;top:1782px">12.09.24</div>
<div class="an" style="left:2764px;top:1782px;letter-spacing:0.12px">Myers</div>
<div class="an" style="left:2640.5px;top:1826px">17.09.24</div>
<div class="an" style="left:2764px;top:1826px;letter-spacing:0.12px">Myers</div>
<svg style="position:absolute;left:0;top:0" width="3898" height="1874"><path d="M1260 550 L1308 548 L1308 552 C1299.36 552 1268.64 1122 1260 1122 Z" fill="#f7d8ce"/><path d="M2578 548 L2626 550 L2626 1474 C2617.36 1474 2586.64 552 2578 552 Z" fill="#f7d8ce"/></svg>
<div style="position:absolute;left:1592px;top:548px;width:987px;height:4px;background:#f7d6cc;"></div>
<div class="ln" style="left:927.5px;top:154px;text-align:left">1</div>
<div class="ln" style="left:927.5px;top:198px;text-align:left">2</div>
<div class="ln" style="left:927.5px;top:242px;text-align:left">3</div>
<div class="ln" style="left:927.5px;top:286px;text-align:left">4</div>
<div class="ln" style="left:927.5px;top:330px;text-align:left">5</div>
<div class="ln" style="left:927.5px;top:374px;text-align:left">6</div>
<div class="ln" style="left:927.5px;top:418px;text-align:left">7</div>
<div class="ln" style="left:927.5px;top:462px;text-align:left">8</div>
<div class="ln" style="left:927.5px;top:506px;text-align:left">9</div>
<div class="ln" style="left:927.5px;top:550px;text-align:left">10</div>
<div class="ln" style="left:927.5px;top:594px;text-align:left">11</div>
<div class="ln cur" style="left:927.5px;top:638px;text-align:left">12</div>
<div class="ln" style="left:927.5px;top:682px;text-align:left">13</div>
<div class="ln" style="left:927.5px;top:726px;text-align:left">14</div>
<div class="ln" style="left:927.5px;top:770px;text-align:left">15</div>
<div class="ln" style="left:927.5px;top:814px;text-align:left">16</div>
<div class="ln" style="left:927.5px;top:858px;text-align:left">17</div>
<div class="ln" style="left:927.5px;top:902px;text-align:left">18</div>
<div class="ln" style="left:927.5px;top:946px;text-align:left">19</div>
<div class="ln" style="left:927.5px;top:990px;text-align:left">20</div>
<div class="ln" style="left:927.5px;top:1034px;text-align:left">21</div>
<div class="ln" style="left:927.5px;top:1078px;text-align:left">22</div>
<div class="ln" style="left:927.5px;top:1122px;text-align:left">23</div>
<div class="ln" style="left:927.5px;top:1166px;text-align:left">24</div>
<div class="ln" style="left:927.5px;top:1210px;text-align:left">25</div>
<div class="ln" style="left:927.5px;top:1254px;text-align:left">26</div>
<div class="ln" style="left:927.5px;top:1298px;text-align:left">27</div>
<div class="ln" style="left:927.5px;top:1342px;text-align:left">28</div>
<div class="ln" style="left:927.5px;top:1386px;text-align:left">29</div>
<div class="ln" style="left:927.5px;top:1430px;text-align:left">30</div>
<div class="ln" style="left:927.5px;top:1474px;text-align:left">31</div>
<div class="ln" style="left:927.5px;top:1518px;text-align:left">32</div>
<div class="ln" style="left:927.5px;top:1562px;text-align:left">33</div>
<div class="ln" style="left:927.5px;top:1606px;text-align:left">34</div>
<div class="ln" style="left:927.5px;top:1650px;text-align:left">35</div>
<div class="ln" style="left:927.5px;top:1694px;text-align:left">36</div>
<div class="ln" style="left:927.5px;top:1738px;text-align:left">37</div>
<div class="ln" style="left:927.5px;top:1782px;text-align:left">38</div>
<div class="ln" style="left:927.5px;top:1826px;text-align:left">39</div>
<div class="ln" style="left:1578px;top:154px">1</div>
<div class="ln" style="left:1578px;top:198px">2</div>
<div class="ln" style="left:1578px;top:242px">3</div>
<div class="ln" style="left:1578px;top:286px">4</div>
<div class="ln" style="left:1578px;top:330px">5</div>
<div class="ln" style="left:1578px;top:374px">6</div>
<div class="ln" style="left:1578px;top:418px">7</div>
<div class="ln" style="left:1578px;top:462px">8</div>
<div class="ln" style="left:1578px;top:506px">9</div>
<div class="ln" style="left:1578px;top:550px">10</div>
<div class="ln cur" style="left:1578px;top:594px">11</div>
<div class="ln" style="left:1578px;top:638px">12</div>
<div class="ln" style="left:1578px;top:682px">13</div>
<div class="ln" style="left:1578px;top:726px">14</div>
<div class="ln" style="left:1578px;top:770px">15</div>
<div class="ln" style="left:1578px;top:814px">16</div>
<div class="ln" style="left:1578px;top:858px">17</div>
<div class="ln" style="left:1578px;top:902px">18</div>
<div class="ln" style="left:1578px;top:946px">19</div>
<div class="ln" style="left:1578px;top:990px">20</div>
<div class="ln" style="left:1578px;top:1034px">21</div>
<div class="ln" style="left:1578px;top:1078px">22</div>
<div class="ln" style="left:1578px;top:1122px">23</div>
<div class="ln" style="left:1578px;top:1166px">24</div>
<div class="ln" style="left:1578px;top:1210px">25</div>
<div class="ln" style="left:1578px;top:1254px">26</div>
<div class="ln" style="left:1578px;top:1298px">27</div>
<div class="ln" style="left:1578px;top:1342px">28</div>
<div class="ln" style="left:1578px;top:1386px">29</div>
<div class="ln" style="left:1578px;top:1430px">30</div>
<div class="ln" style="left:1578px;top:1474px">31</div>
<div class="ln" style="left:1578px;top:1518px">32</div>
<div class="ln" style="left:1578px;top:1562px">33</div>
<div class="ln" style="left:1578px;top:1606px">34</div>
<div class="ln" style="left:1578px;top:1650px">35</div>
<div class="ln" style="left:1578px;top:1694px">36</div>
<div class="ln" style="left:1578px;top:1738px">37</div>
<div class="ln" style="left:1578px;top:1782px">38</div>
<div class="ln" style="left:1578px;top:1826px">39</div>
<div class="ln" style="left:2896px;top:154px">1</div>
<div class="ln" style="left:2896px;top:198px">2</div>
<div class="ln" style="left:2896px;top:242px">3</div>
<div class="ln" style="left:2896px;top:286px">4</div>
<div class="ln" style="left:2896px;top:330px">5</div>
<div class="ln" style="left:2896px;top:374px">6</div>
<div class="ln" style="left:2896px;top:418px">7</div>
<div class="ln" style="left:2896px;top:462px">8</div>
<div class="ln" style="left:2896px;top:506px">9</div>
<div class="ln cur" style="left:2896px;top:550px">10</div>
<div class="ln" style="left:2896px;top:594px">11</div>
<div class="ln" style="left:2896px;top:638px">12</div>
<div class="ln" style="left:2896px;top:682px">13</div>
<div class="ln" style="left:2896px;top:726px">14</div>
<div class="ln" style="left:2896px;top:770px">15</div>
<div class="ln" style="left:2896px;top:814px">16</div>
<div class="ln" style="left:2896px;top:858px">17</div>
<div class="ln" style="left:2896px;top:902px">18</div>
<div class="ln" style="left:2896px;top:946px">19</div>
<div class="ln" style="left:2896px;top:990px">20</div>
<div class="ln" style="left:2896px;top:1034px">21</div>
<div class="ln" style="left:2896px;top:1078px">22</div>
<div class="ln" style="left:2896px;top:1122px">23</div>
<div class="ln" style="left:2896px;top:1166px">24</div>
<div class="ln" style="left:2896px;top:1210px">25</div>
<div class="ln" style="left:2896px;top:1254px">26</div>
<div class="ln" style="left:2896px;top:1298px">27</div>
<div class="ln" style="left:2896px;top:1342px">28</div>
<div class="ln" style="left:2896px;top:1386px">29</div>
<div class="ln" style="left:2896px;top:1430px">30</div>
<div class="ln" style="left:2896px;top:1474px">31</div>
<div class="ln" style="left:2896px;top:1518px">32</div>
<div class="ln" style="left:2896px;top:1562px">33</div>
<div class="ln" style="left:2896px;top:1606px">34</div>
<div class="ln" style="left:2896px;top:1650px">35</div>
<div class="ln" style="left:2896px;top:1694px">36</div>
<div class="ln" style="left:2896px;top:1738px">37</div>
<div class="ln" style="left:2896px;top:1782px">38</div>
<div class="ln" style="left:2896px;top:1826px">39</div>
<div class="tp" style="left:24px;width:792px;">
<div class="tl" style="top:0px;left:2px">API Changelog (Breaking Changes)</div>
<div class="tl" style="top:44px;left:2px">================================</div>
<div class="tl" style="top:132px;left:2px">This API changelog is experimental and we would love feedback on improving its format.</div>
<div class="tl" style="top:220px;left:2px"><span class="kb">.. contents::</span> |toctitle|</div>
<div class="tl" style="top:264px;left:2px">    <span class="kb">:local:</span></div>
<div class="tl" style="top:308px;left:2px">    <span class="kb">:depth:</span> <span class="ki">1</span></div>
<div class="tl" style="top:396px;left:2px">v6.6</div>
<div class="tl" style="top:440px;left:2px">----</div>
<div class="tl" style="top:528px;left:2px"><span class="kb">-</span> The JSON representation for a datasetVersion sent out by the API</div>
<div class="tl" style="top:616px;left:2px">  <span class="kb">-</span> "versionNote" -&gt; "deaccessionNote"</div>
<div class="tl" style="top:660px;left:2px">  <span class="kb">-</span>  "archiveNote" --&gt; "deaccessionLink"</div>
<div class="tl" style="top:704px;left:2px">  <span class="kb">-</span> These may be non-null for deaccessioned versions</div>
<div class="tl" style="top:792px;left:2px"><span class="kb">-</span> <span class="kB">**/api/metadatablocks**</span> is no longer returning duplicate</div>
<div class="tl" style="top:836px;left:2px"><span class="kb">-</span> <span class="kB">**/api/roles**</span>: <span class="kb">:ref:</span><span class="kg">`</span><span class="kb">show-role</span><span class="kg">`</span> now properly returns</div>
<div class="tl" style="top:880px;left:2px"><span class="kb">-</span> The content type for the <span class="kg">``</span><span class="kG">schema.org</span><span class="kg">``</span> dataset metadata</div>
<div class="tl" style="top:968px;left:2px">v6.5</div>
<div class="tl" style="top:1012px;left:2px">----</div>
<div class="tl" style="top:1100px;left:2px"><span class="kb">-</span> <span class="kB">**/api/datasets/{identifier}/links**</span>: The response from</div>
<div class="tl" style="top:1188px;left:2px">v6.4</div>
<div class="tl" style="top:1232px;left:2px">----</div>
<div class="tl" style="top:1320px;left:2px"><span class="kb">-</span> <span class="kB">**/api/datasets/$dataset-id/modifyRegistration**</span>: Changed</div>
<div class="tl" style="top:1364px;left:2px"><span class="kb">-</span> <span class="kB">**/api/datasets/modifyRegistrationPIDMetadataAll**</span>: Changed</div>
<div class="tl" style="top:1452px;left:2px">v6.3</div>
<div class="tl" style="top:1496px;left:2px">----</div>
<div class="tl" style="top:1584px;left:2px"><span class="kb">-</span> <span class="kB">**/api/admin/superuser/{identifier}**</span>: The POST endpoint</div>
<div class="tl" style="top:1672px;left:2px">v6.2</div>
</div>
<div class="tp" style="left:1682px;width:897px;">
<div class="tl" style="top:0px;left:4.5px">API Changelog (Breaking Changes)</div>
<div class="tl" style="top:44px;left:4.5px">================================</div>
<div class="tl" style="top:132px;left:4.5px">This API changelog is experimental and we would love feedback on improving its format.</div>
<div class="tl" style="top:220px;left:4.5px"><span class="kb">.. contents::</span> |toctitle|</div>
<div class="tl" style="top:264px;left:4.5px">    <span class="kb">:local:</span></div>
<div class="tl" style="top:308px;left:4.5px">    <span class="kb">:depth:</span> <span class="ki">1</span></div>
<div class="tl" style="top:396px;left:4.5px">v6.5</div>
<div class="tl" style="top:440px;left:4.5px">----</div>
<div class="tl" style="top:528px;left:4.5px"><span class="kb">-</span> <span class="kB">**/api/datasets/{identifier}/links**</span>: The response from</div>
<div class="tl" style="top:616px;left:4.5px">v6.4</div>
<div class="tl" style="top:660px;left:4.5px">----</div>
<div class="tl" style="top:748px;left:4.5px"><span class="kb">-</span> <span class="kB">**/api/datasets/$dataset-id/modifyRegistration**</span>: Changed</div>
<div class="tl" style="top:792px;left:4.5px"><span class="kb">-</span> <span class="kB">**/api/datasets/modifyRegistrationPIDMetadataAll**</span>: Changed</div>
<div class="tl" style="top:880px;left:4.5px">v6.3</div>
<div class="tl" style="top:924px;left:4.5px">----</div>
<div class="tl" style="top:1012px;left:4.5px"><span class="kb">-</span> <span class="kB">**/api/admin/superuser/{identifier}**</span>: The POST endpoint</div>
<div class="tl" style="top:1100px;left:4.5px">v6.2</div>
<div class="tl" style="top:1144px;left:4.5px">----</div>
<div class="tl" style="top:1232px;left:4.5px"><span class="kb">-</span> The fields "northLongitude" and "southLongitude" have been swapped</div>
<div class="tl" style="top:1320px;left:4.5px"><span class="kb">-</span> <span class="kB">**/api/datasets/{id}/versions/{versionId}**</span>: The includeFiles</div>
<div class="tl" style="top:1364px;left:4.5px"><span class="kb">-</span> <span class="kB">**/api/datasets/{id}/versions**</span>: The includeFiles parameter</div>
<div class="tl" style="top:1408px;left:4.5px"><span class="kb">-</span> <span class="kB">**/api/files/$ID/uningest**</span>: Can now be used by users with</div>
<div class="tl" style="top:1496px;left:4.5px">v6.1</div>
<div class="tl" style="top:1540px;left:4.5px">----</div>
<div class="tl" style="top:1628px;left:4.5px"><span class="kb">-</span> The metadata field "Alternative Title" now supports multiple values</div>
</div>
<div class="tp" style="left:3065px;width:833px;">
<div class="tl" style="top:0px;left:5px">API Changelog (Breaking Changes)</div>
<div class="tl" style="top:44px;left:5px">================================</div>
<div class="tl" style="top:132px;left:5px">This API changelog is experimental and we would love feedback on improving its format.</div>
<div class="tl" style="top:220px;left:5px"><span class="kb">.. contents::</span> |toctitle|</div>
<div class="tl" style="top:264px;left:5px">    <span class="kb">:local:</span></div>
<div class="tl" style="top:308px;left:5px">    <span class="kb">:depth:</span> <span class="ki">1</span></div>
<div class="tl" style="top:396px;left:5px">v6.7</div>
<div class="tl" style="top:440px;left:5px">----</div>
<div class="tl" style="top:528px;left:5px"><span class="kb">-</span> An undocumented <span class="kb">:doc:</span><span class="kg">`</span><span class="kb">search</span><span class="kg">`</span> parameter called "show_my_data"</div>
<div class="tl" style="top:572px;left:5px"><span class="kb">-</span> /api/datasets/{id}/curationStatus API now includes</div>
<div class="tl" style="top:616px;left:5px"><span class="kb">-</span> /api/datasets/{id}/listCurationStates includes new</div>
<div class="tl" style="top:660px;left:5px"><span class="kb">-</span> Due to updates in libraries used by Dataverse, XML</div>
<div class="tl" style="top:748px;left:5px">v6.6</div>
<div class="tl" style="top:792px;left:5px">----</div>
<div class="tl" style="top:880px;left:5px"><span class="kb">-</span> The JSON representation for a datasetVersion sent out by the API</div>
<div class="tl" style="top:968px;left:5px">  <span class="kb">-</span> "versionNote" -&gt; "deaccessionNote"</div>
<div class="tl" style="top:1012px;left:5px">  <span class="kb">-</span>  "archiveNote" --&gt; "deaccessionLink"</div>
<div class="tl" style="top:1056px;left:5px">  <span class="kb">-</span> These may be non-null for deaccessioned versions</div>
<div class="tl" style="top:1144px;left:5px"><span class="kb">-</span> <span class="kB">**/api/metadatablocks**</span> is no longer returning duplicate</div>
<div class="tl" style="top:1188px;left:5px"><span class="kb">-</span> <span class="kB">**/api/roles**</span>: <span class="kb">:ref:</span><span class="kg">`</span><span class="kb">show-role</span><span class="kg">`</span> now properly returns</div>
<div class="tl" style="top:1232px;left:5px"><span class="kb">-</span> The content type for the <span class="kg">``</span><span class="kG">schema.org</span><span class="kg">``</span> dataset metadata</div>
<div class="tl" style="top:1320px;left:5px">v6.5</div>
<div class="tl" style="top:1364px;left:5px">----</div>
<div class="tl" style="top:1452px;left:5px"><span class="kb">-</span> <span class="kB">**/api/datasets/{identifier}/links**</span>: The response from</div>
<div class="tl" style="top:1540px;left:5px">v6.4</div>
<div class="tl" style="top:1584px;left:5px">----</div>
</div>
<svg style="position:absolute;left:0;top:0" width="3898" height="1874">
<g fill="none" stroke="#6c707e" stroke-width="1.7" stroke-linecap="round" stroke-linejoin="round">
<path d="M858.4 560.6 L881.4 583.3 M881.4 560.6 L858.4 583.3"/>
<path d="M894.8 562.6 L904.3 572 L894.8 581.3 M904.8 562.6 L914.3 572 L904.8 581.3"/>
<path d="M2981.5 562.6 L2972 572 L2981.5 581.3 M2991.5 562.6 L2982 572 L2991.5 581.3"/>
<path d="M3004.5 560.6 L3027.5 583.3 M3027.5 560.6 L3004.5 583.3"/>
</g></svg>
<div style="position:absolute;left:0px;top:376px;width:18px;height:295px;background:#f5cdc4;"></div>
<div style="position:absolute;left:-8px;top:158px;width:20px;height:928px;background:rgba(0,0,0,0.235);border-radius:8px;"></div>
<div style="position:absolute;left:2556px;top:158px;width:16px;height:1152px;background:rgba(0,0,0,0.235);border-radius:8px;"></div>
<div style="position:absolute;left:3868px;top:352px;width:30px;height:441px;background:#f4cdc3;"></div>
<div style="position:absolute;left:3875px;top:158px;width:16px;height:833px;background:rgba(0,0,0,0.235);border-radius:8px;"></div>
<div style="position:absolute;left:0px;top:1832px;width:816px;height:28px;background:#f3f3f3;"></div>
<div style="position:absolute;left:0px;top:1839px;width:90px;height:15px;background:#c6c6c6;border-radius:8px;"></div>
<div style="position:absolute;left:1685px;top:1832px;width:893px;height:28px;background:#f3f3f3;"></div>
<div style="position:absolute;left:1692px;top:1838px;width:112px;height:16px;background:#c6c6c6;border-radius:8px;"></div>
<div style="position:absolute;left:3069px;top:1832px;width:829px;height:28px;background:#f3f3f3;"></div>
<div style="position:absolute;left:3076px;top:1837px;width:93px;height:16px;background:#c6c6c6;border-radius:8px;"></div>
<div style="position:absolute;left:0px;top:1860px;width:3898px;height:14px;background:#f7f8fa;"></div>
<div style="position:absolute;left:3896px;top:10px;width:1px;height:1864px;background:#a9a9a9;"></div>
<div style="position:absolute;left:3897px;top:0px;width:1px;height:1874px;background:#e2e2e2;"></div>
<svg style="position:absolute;left:3880px;top:0" width="18" height="12"><path d="M12.5 0 Q16.5 3 16.5 10" fill="none" stroke="#b5b5b5" stroke-width="1"/></svg>
</body></html>
